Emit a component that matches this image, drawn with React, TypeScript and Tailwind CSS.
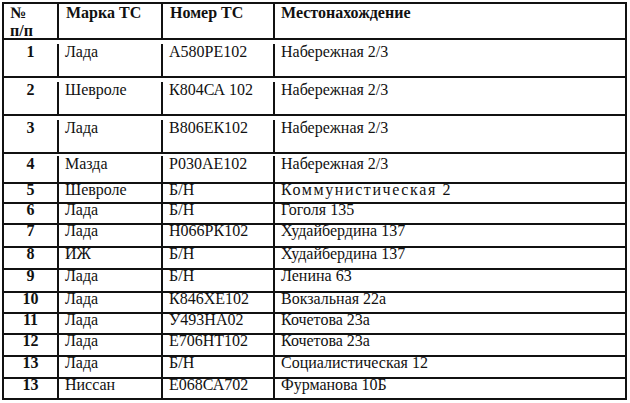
const rows = [
  { n: "1", brand: "Лада", plate: "А580РЕ102", place: "Набережная 2/3", h: "h-[38px]", t: "pt-[4px] leading-[16px]" },
  { n: "2", brand: "Шевроле", plate: "К804СА 102", place: "Набережная 2/3", h: "h-[38px]", t: "pt-[4px] leading-[16px]" },
  { n: "3", brand: "Лада", plate: "В806ЕК102", place: "Набережная 2/3", h: "h-[38px]", t: "pt-[4px] leading-[16px]" },
  { n: "4", brand: "Мазда", plate: "Р030АЕ102", place: "Набережная 2/3", h: "h-[30px]", t: "pt-[2px] leading-[16px]" },
  { n: "5", brand: "Шевроле", plate: "Б/Н", place: "Коммунистическая 2", h: "h-[20px]", t: "leading-[12px]", wide: true },
  { n: "6", brand: "Лада", plate: "Б/Н", place: "Гоголя 135", h: "h-[21px]", t: "leading-[12px]" },
  { n: "7", brand: "Лада", plate: "Н066РК102", place: "Худайбердина 137", h: "h-[23px]", t: "leading-[12px]" },
  { n: "8", brand: "ИЖ", plate: "Б/Н", place: "Худайбердина 137", h: "h-[22px]", t: "leading-[12px]" },
  { n: "9", brand: "Лада", plate: "Б/Н", place: "Ленина 63", h: "h-[23px]", t: "leading-[12px]" },
  { n: "10", brand: "Лада", plate: "К846ХЕ102", place: "Вокзальная 22а", h: "h-[21px]", t: "leading-[12px]" },
  { n: "11", brand: "Лада", plate: "У493НА02", place: "Кочетова 23а", h: "h-[21px]", t: "leading-[12px]" },
  { n: "12", brand: "Лада", plate: "Е706НТ102", place: "Кочетова 23а", h: "h-[22px]", t: "leading-[12px]" },
  { n: "13", brand: "Лада", plate: "Б/Н", place: "Социалистическая 12", h: "h-[22px]", t: "leading-[12px]" },
  { n: "13", brand: "Ниссан", plate: "Е068СА702", place: "Фурманова 10Б", h: "h-[21px]", t: "leading-[12px]" },
]

export default function App() {
  return (
    <div className="min-h-[403px] w-[630px] bg-white pt-[2px] pl-[2px] text-[16px] text-[#111] [font-family:'Liberation_Serif','Times_New_Roman',serif]">
      <div className="w-[625px] border-2 border-[#111]">
        {/* header */}
        <div className="flex h-[34px] font-bold leading-[18px]">
          <div className="w-[53px] pl-[6px]">
            <div>№</div>
            <div>п/п</div>
          </div>
          <div className="w-[104px] border-l-2 border-[#111] pl-[7px]">Марка ТС</div>
          <div className="w-[112px] border-l-2 border-[#111] pl-[7px]">Номер ТС</div>
          <div className="flex-1 border-l-2 border-[#111] pl-[6px]">Местонахождение</div>
        </div>

        {rows.map((r, i) => (
          <div key={i} className={`flex border-t-2 border-[#111] ${r.h} ${r.t}`}>
            <div className="w-[53px] text-center font-bold">{r.n}</div>
            <div className="w-[104px] border-l-2 border-[#111] pl-[6px]">{r.brand}</div>
            <div className="w-[112px] border-l-2 border-[#111] pl-[6px]">{r.plate}</div>
            <div className={`flex-1 border-l-2 border-[#111] pl-[6px] ${r.wide ? "tracking-[1.6px]" : ""}`}>
              {r.place}
            </div>
          </div>
        ))}
      </div>
    </div>
  )
}
